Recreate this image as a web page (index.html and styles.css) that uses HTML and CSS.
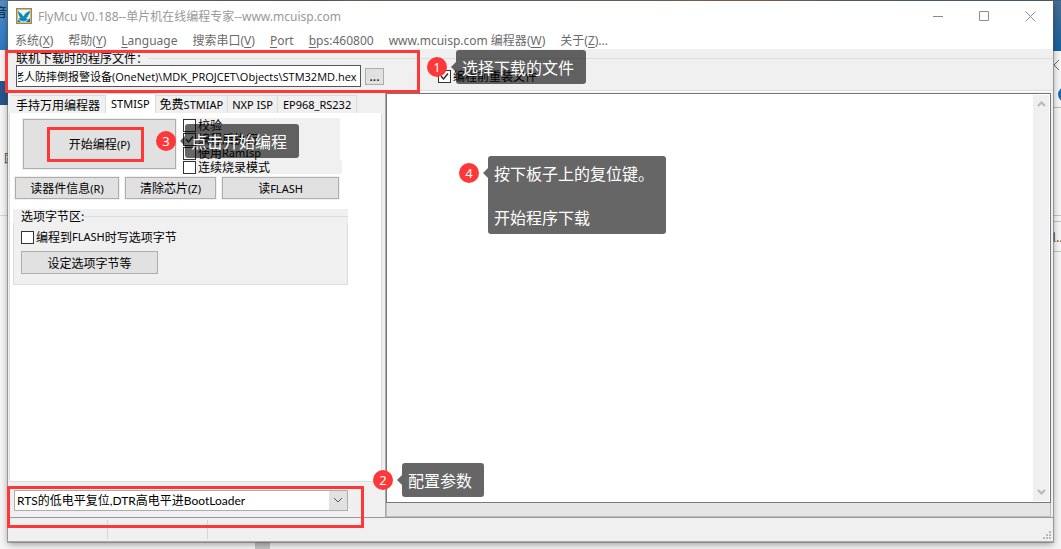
FILE: index.html
```html
<!DOCTYPE html>
<html lang="zh-CN">
<head>
<meta charset="utf-8">
<title>FlyMcu</title>
<link rel="stylesheet" href="styles.css">
</head>
<body>
<div class="desktop">
  <span class="behind behind-left-top">音</span>
  <span class="behind behind-left">固</span>
  <span class="behind behind-right">l...</span>
  <svg class="behind behind-arrow" width="7" height="12" viewBox="0 0 7 12"><path d="M6 1L1 6l5 5" fill="none" stroke="#666"/></svg>
  <span class="behind behind-dot"></span>
  <main class="window">
    <header class="titlebar">
      <svg class="logo" width="16" height="16" viewBox="0 0 16 16">
        <rect width="16" height="16" fill="#a8843c"/><rect x="1.500" y="1.500" width="13" height="13" fill="#e8f4f8"/>
        <path d="M2 2.500c1 2 3 2.500 4 4l1.500 2L9 6c1-2 3-1.500 5-3.500-.2 2.500-.6 4-2 5 .3 1-.8 2-2 2.500l2 1.500c-2 1.500-3.500 2-5 1.800C4.500 13 3 12 2.500 10.500L4.500 10C2.800 8.500 2 5.500 2 2.500z" fill="#1488b4"/>
        <path d="M2 11.500L5 14H2zM14 10v4h-4z" fill="#0e6b96"/>
      </svg>
      <h1 class="title"><span class="en">FlyMcu V0.188--</span>单片机在线编程专家<span class="en">--www.mcuisp.com</span></h1>
      <div class="controls">
        <button class="control" aria-label="最小化"><svg width="11" height="11" viewBox="0 0 11 11"><path d="M0 5.500h10"/></svg></button>
        <button class="control" aria-label="最大化"><svg width="11" height="11" viewBox="0 0 11 11"><path d="M.5.5h9v9h-9z"/></svg></button>
        <button class="control" aria-label="关闭"><svg width="11" height="11" viewBox="0 0 11 11"><path d="M.5.5l10 10M10.500.5l-10 10"/></svg></button>
      </div>
    </header>
    <nav class="menubar">
      <button>系统<span class="en">(<u>X</u>)</span></button>
      <button>帮助<span class="en">(<u>Y</u>)</span></button>
      <button><span class="en"><u>L</u>anguage</span></button>
      <button>搜索串口<span class="en">(<u>V</u>)</span></button>
      <button><span class="en"><u>P</u>ort</span></button>
      <button><span class="en"><u>b</u>ps:460800</span></button>
      <button><span class="en">www.mcuisp.com </span>编程器<span class="en">(<u>W</u>)</span></button>
      <button>关于<span class="en">(<u>Z</u>)...</span></button>
    </nav>
    <section class="filebar">
      <div class="caption"><label for="hex">联机下载时的程序文件：</label></div>
      <div class="file-row">
        <input id="hex" class="path" type="text" value="老人防摔倒报警设备(OneNet)\MDK_PROJCET\Objects\STM32MD.hex">
        <button class="push browse">...</button>
        <label class="check reload"><input type="checkbox" checked>编程前重装文件</label>
      </div>
    </section>
    <div class="body">
      <section class="side">
        <div class="tabs" role="tablist">
          <button class="tab" role="tab">手持万用编程器</button>
          <button class="tab active" role="tab"><span class="en">STMISP</span></button>
          <button class="tab" role="tab">免费<span class="en">STMIAP</span></button>
          <button class="tab" role="tab"><span class="en">NXP ISP</span></button>
          <button class="tab" role="tab"><span class="en">EP968_RS232</span></button>
        </div>
        <div class="page">
          <div class="program">
            <button class="push start">开始编程<span class="en">(P)</span></button>
            <div class="options">
              <label class="check"><input type="checkbox">校验</label>
              <label class="check"><input type="checkbox" checked>编程后执行</label>
              <label class="check"><input type="checkbox">使用<span class="en">RamIsp</span></label>
              <label class="check wide"><input type="checkbox">连续烧录模式</label>
            </div>
          </div>
          <div class="actions">
            <button class="push read">读器件信息<span class="en">(R)</span></button>
            <button class="push erase">清除芯片<span class="en">(Z)</span></button>
            <button class="push flash">读<span class="en">FLASH</span></button>
          </div>
          <div class="group">
            <div class="caption">选项字节区:</div>
            <div class="group-body">
              <label class="check"><input type="checkbox">编程到<span class="en">FLASH</span>时写选项字节</label>
              <button class="push set">设定选项字节等</button>
            </div>
          </div>
        </div>
        <div class="mode">
          <select aria-label="复位方式"><option>RTS的低电平复位,DTR高电平进BootLoader</option></select>
        </div>
      </section>
      <section class="output">
        <div class="log">
          <textarea aria-label="输出" readonly></textarea>
          <div class="scrollbar">
            <svg width="9" height="6" viewBox="0 0 9 6"><path d="M1 5l3.500-3.500L8 5"/></svg>
            <svg width="9" height="6" viewBox="0 0 9 6"><path d="M1 1l3.500 3.500L8 1"/></svg>
          </div>
        </div>
        <div class="progress"></div>
      </section>
    </div>
    <footer class="status">
      <span class="cell"></span><span class="cell"></span>
      <svg class="grip" width="8" height="8" viewBox="0 0 8 8"><path d="M6 0h2v2H6zM3 3h2v2H3zM6 3h2v2H6zM0 6h2v2H0zM3 6h2v2H3zM6 6h2v2H6z" fill="#b8b8b8"/></svg>
    </footer>
  </main>
  <div class="frame frame-file"></div>
  <div class="frame frame-start"></div>
  <div class="frame frame-mode"></div>
  <div class="callout callout-file"><span class="badge">1</span><p class="bubble">选择下载的文件</p></div>
  <div class="callout callout-mode"><span class="badge">2</span><p class="bubble">配置参数</p></div>
  <div class="callout callout-start"><span class="badge">3</span><p class="bubble">点击开始编程</p></div>
  <div class="callout callout-reset"><span class="badge">4</span><p class="bubble">按下板子上的复位键。<br><br>开始程序下载</p></div>
</div>
</body>
</html>
```
FILE: styles.css
```css
* { box-sizing: border-box; }
body {
  margin: 0;
  font: 12px/14px "Noto Sans CJK SC", sans-serif;
  color: #000;
}
button, input, select, textarea { font: inherit; color: inherit; margin: 0; }
button { padding: 0; border: 0; background: none; white-space: nowrap; }
.en { font-family: "Noto Sans", sans-serif; font-size: 11px; }

.desktop {
  position: relative;
  height: 100vh;
  padding: 1px 8px 7px;
  overflow: hidden;
  background:
    linear-gradient(90deg, #6b747d, #50565e 30%, #8a6d55 34%, #5c6d80 40%, #a5683a 72%, #48617c 80%, #31648f) top / 100% 1px no-repeat,
    linear-gradient(#4a90cf, #2f78bd) 0 0 / 8px 50px no-repeat,
    linear-gradient(#24568c, #24568c) 0 81px / 8px 24px no-repeat,
    linear-gradient(#4b6c91, #1562a0) 100% 0 / 8px 51px no-repeat,
    linear-gradient(#bbb, #bbb) 100% 107px / 8px 1px no-repeat,
    linear-gradient(#c4c4c4, #c4c4c4) 100% 215px / 8px 1px no-repeat,
    linear-gradient(#c4c4c4, #c4c4c4) 100% 221px / 8px 1px no-repeat,
    linear-gradient(#c4c4c4, #c4c4c4) 100% 251px / 8px 1px no-repeat,
    linear-gradient(#d3d6dc, #d3d6dc) 0 215px / 8px 1px no-repeat,
    linear-gradient(#c4c4c4, #c4c4c4) 255px 100% / 15px 8px no-repeat,
    #f5f5f6;
}
.behind { position: absolute; color: #444; }
.behind-left-top { left: -5px; top: 5px; color: #123; }
.behind-left { left: 4px; top: 151px; }
.behind-right { right: -5px; top: 230px; }
.behind-arrow { right: 1px; top: 59px; }
.behind-dot { right: -12px; top: 87px; width: 15px; height: 15px; border-radius: 50%; background: #1467b3; }

.window {
  position: relative;
  height: 100%;
  display: flex;
  flex-direction: column;
  background: #f0f0f0;
  box-shadow: 0 0 0 1px rgba(90, 90, 90, .45), 0 2px 7px rgba(0, 0, 0, .4);
}
.titlebar { flex: none; display: flex; align-items: center; height: 30px; padding-left: 8px; background: #fff; }
.title { margin: 0 auto 0 6px; font-size: 12px; font-weight: 400; color: #999; white-space: nowrap; }
.title .en, .menubar .en { font-size: 12px; }
.controls { display: flex; }
.control { width: 46px; height: 28px; display: grid; place-items: center; }
.control svg { fill: none; stroke: #8c8c8c; }
.menubar { flex: none; display: flex; gap: 15px; height: 18px; padding-left: 7px; background: #fff; color: #6a6a6a; }
.menubar button { line-height: 18px; white-space: pre; }
.menubar u { text-underline-offset: 2px; text-decoration-thickness: 1px; }

.filebar { flex: none; height: 43px; padding-top: 2px; border-bottom: 1px solid #fff; box-shadow: inset 0 -1px #dcdcdc; }
.caption { display: flex; align-items: center; height: 14px; padding-left: 8px; }
.caption::after { content: ""; flex: 1; height: 1px; background: #dcdcdc; }
.file-row { display: flex; align-items: center; height: 22px; padding-left: 8px; }
.path {
  width: 345px;
  height: 22px;
  padding: 0 1px;
  border: 1px solid #555;
  background: #fff;
  font-family: "Open Sans", "Noto Sans CJK SC", sans-serif;
  font-size: 11px;
  text-indent: -5px;
}
.push { border: 1px solid #adadad; background: #e1e1e1; box-shadow: 0 0 0 1px #f0f0f0; line-height: 18px; }
.browse { width: 19px; height: 17px; margin-left: 4px; line-height: 14px; }
.reload { margin-left: 54px; }
.check { display: flex; align-items: center; height: 14px; white-space: nowrap; }
.check input {
  appearance: none;
  flex: none;
  width: 13px;
  height: 13px;
  margin-right: 2px;
  border: 1px solid #333;
  background: #fff;
}
.check input:checked {
  background: #fff url("data:image/svg+xml,%3Csvg xmlns='http://www.w3.org/2000/svg' viewBox='0 0 11 11'%3E%3Cpath d='M2 5l2.500 3L9 2.500' fill='none' stroke='%23222' stroke-width='1.300'/%3E%3C/svg%3E");
}

.body { flex: 1; min-height: 0; display: flex; }
.side { flex: none; width: 378px; padding: 1px 3px 0 1px; display: flex; flex-direction: column; border-right: 1px solid #aaa; }
.tabs { display: flex; align-items: flex-end; height: 20px; padding-left: 2px; }
.tab { height: 18px; padding: 0 4px; border: 1px solid #dcdcdc; border-left: 0; border-bottom: 0; line-height: 16px; }
.tab:first-child { padding: 0 5px; }
.tab.active { height: 20px; padding: 0 5px; background: #fff; }
.tab:last-child { padding: 0 5px; }
.page { flex: 1; min-height: 0; padding: 6px 4px 0; background: #fff; border: 1px solid #dcdcdc; border-top: 0; }
.program { display: flex; gap: 7px; padding-left: 9px; }
.start { width: 153px; height: 50px; }
.options { margin-top: -1px; }
.options .check { width: 157px; background: #f0f0f0; }
.options .wide { width: 159px; }
.actions { display: flex; gap: 6px; padding: 3px 0 0 1px; }
.actions .push { height: 22px; }
.read { width: 104px; }
.erase { width: 91px; }
.flash { width: 117px; }
.group { width: 335px; margin: 10px 0 0 -1px; background: #f0f0f0; }
.group-body { padding: 7px 7px 10px; border: 1px solid #dcdcdc; border-top: 0; }
.set { width: 137px; height: 23px; margin-top: 7px; }
.mode { flex: none; height: 35px; padding: 8px 0 0 5px; }
.mode select {
  appearance: none;
  width: 334px;
  height: 21px;
  padding: 0 2px;
  border: 1px solid #adadad;
  outline: 1px solid #f0f0f0;
  font-size: 12px;
  font-family: Lato, "Noto Sans CJK SC", sans-serif;
  line-height: 18px;
  background: url("data:image/svg+xml,%3Csvg xmlns='http://www.w3.org/2000/svg' width='18' height='19'%3E%3Cpath fill='%23e1e1e1' d='M0 0h18v19H0z'/%3E%3Cpath d='M5 7l4 4 4-4' fill='none' stroke='%23555'/%3E%3C/svg%3E") right / 18px 19px no-repeat #fff;
}

.output { flex: 1; min-width: 0; display: flex; flex-direction: column; padding: 1px 2px 0 0; }
.log { flex: 1; min-height: 0; display: flex; padding: 1px; background: #fff; border: 1px solid #777; }
.log textarea { flex: 1; min-width: 0; border: 0; resize: none; outline: 0; background: #fff; }
.scrollbar { width: 16px; display: flex; flex-direction: column; align-items: center; justify-content: space-between; padding: 6px 0; background: #f0f0f0; }
.scrollbar svg { fill: none; stroke: #b8b8b8; stroke-width: 2; }
.progress { height: 14px; background: #e5e5e5; border: 1px solid #bbb; border-top: 0; }
.status { flex: none; display: flex; height: 25px; padding: 2px 2px 2px 0; border-top: 1px solid #999; border-bottom: 1px solid #aaa; }
.cell { width: 100px; border-right: 1px solid #d5d5d5; }
.grip { margin: auto 0 0 auto; }

.frame { position: absolute; border: 3px solid #fc3838; }
.frame-file { left: 5px; top: 50px; width: 415px; height: 43px; }
.frame-start { left: 47px; top: 127px; width: 97px; height: 35px; }
.frame-mode { left: 7px; bottom: 21px; width: 357px; height: 42px; }
.callout { position: absolute; display: flex; gap: 9px; }
.callout-file { left: 427px; top: 50px; }
.callout-mode { left: 373px; bottom: 52px; }
.callout-start { left: 156px; top: 124px; }
.callout-reset { left: 459px; top: 156px; }
.badge {
  width: 20px;
  height: 20px;
  margin-top: 7px;
  border-radius: 50%;
  background: #fc3838;
  color: #fff;
  font: 13px/20px "Noto Sans", sans-serif;
  text-align: center;
}
.bubble {
  position: relative;
  margin: 0;
  padding: 6px 12px 6px 6px;
  border-radius: 3px;
  background: rgba(0, 0, 0, .6);
  color: #fff;
  font-size: 16px;
  line-height: 22px;
  white-space: nowrap;
}
.bubble::before {
  content: "";
  position: absolute;
  left: -5px;
  top: 12px;
  border: solid transparent;
  border-width: 5px 5px 5px 0;
  border-right-color: rgba(0, 0, 0, .6);
}
```
